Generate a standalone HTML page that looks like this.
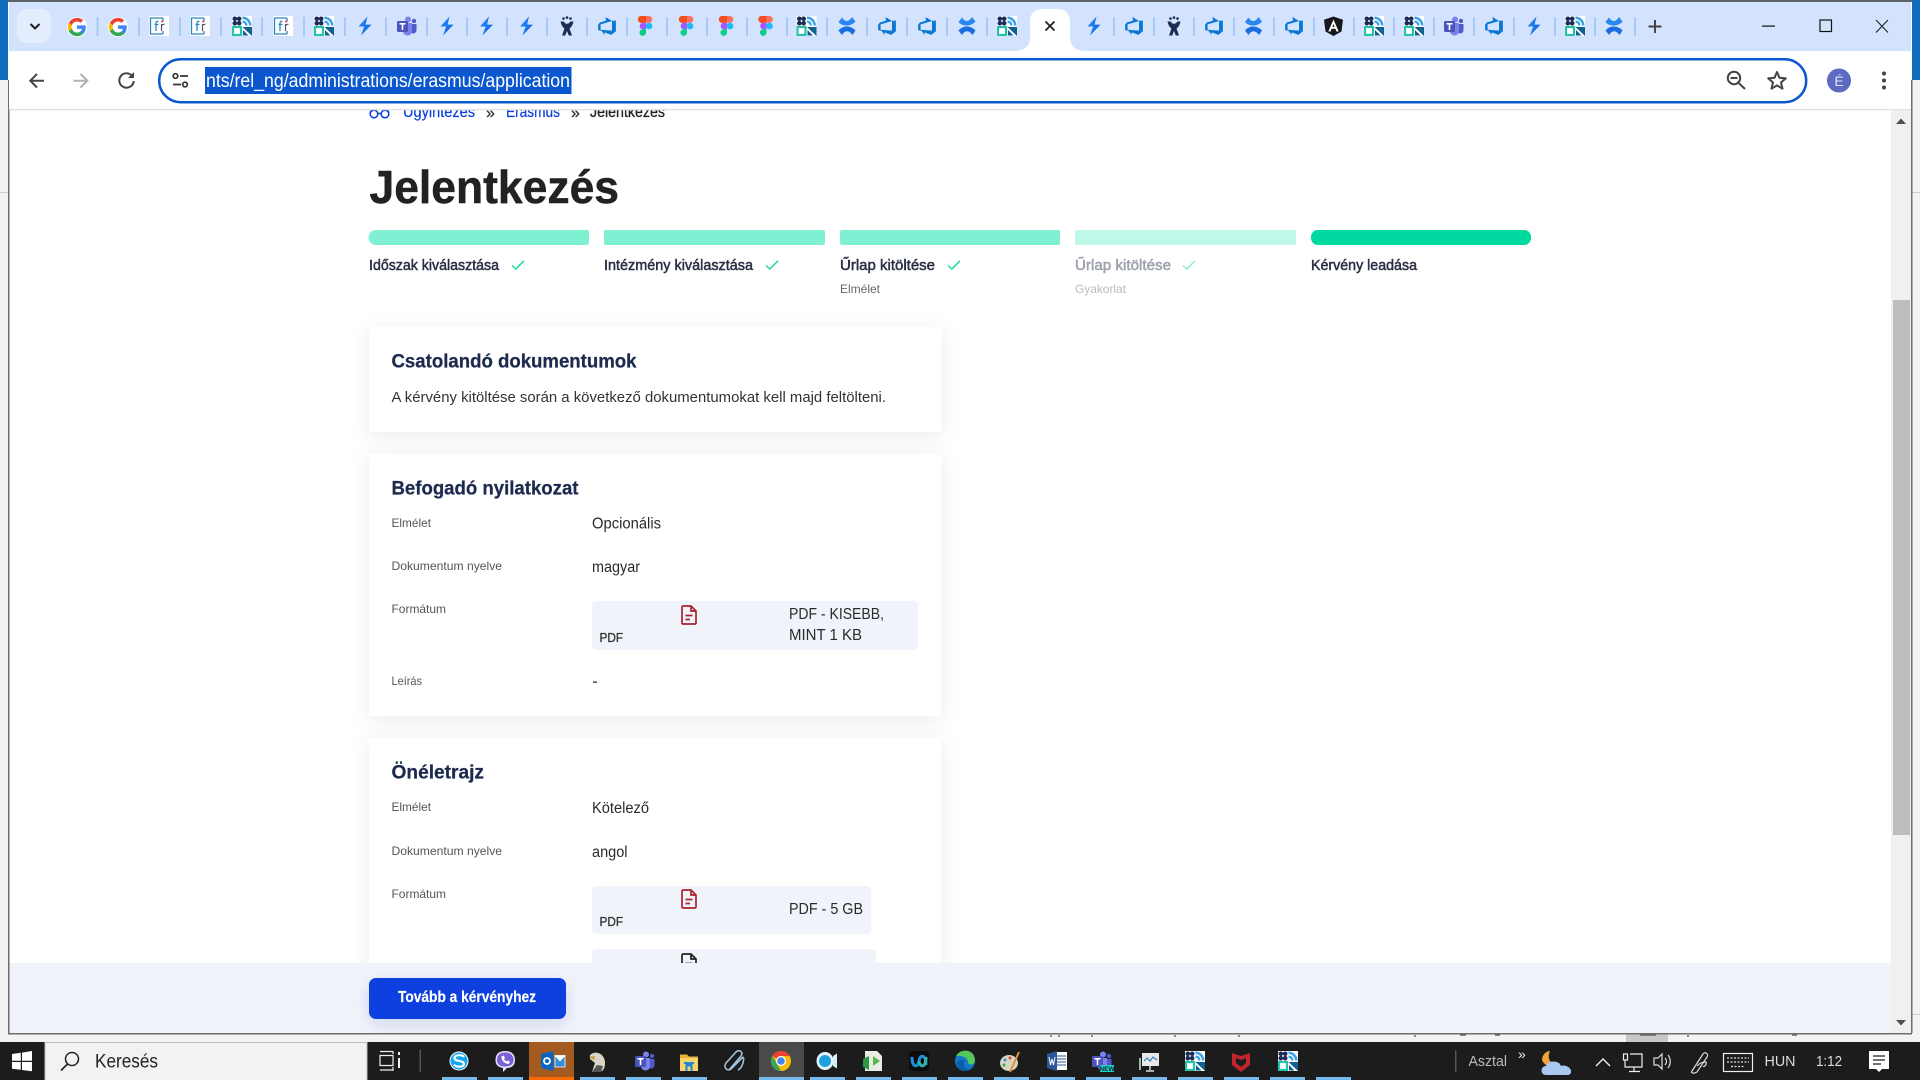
<!DOCTYPE html>
<html lang="hu">
<head>
<meta charset="utf-8">
<title>Jelentkezés</title>
<style>
html,body{margin:0;padding:0;background:#fff;width:1920px;height:1080px;overflow:hidden}
svg{display:block}
text{font-family:"Liberation Sans",sans-serif}
.h{font-weight:700;fill:#1c2a4e;stroke:#1c2a4e;stroke-width:.25;font-size:19px}
.s{font-size:15px;fill:#2a2f45;stroke:#2a2f45;stroke-width:.5}
.l{font-size:12px;fill:#555}
.v{font-size:15.5px;fill:#2b2b2b}
.p{font-size:12.5px;fill:#333;stroke:#333;stroke-width:.3}
.b{font-size:15.5px;fill:#0b3fdc;stroke:#0b3fdc;stroke-width:.2}
</style>
</head>
<body>
<svg xmlns="http://www.w3.org/2000/svg" width="1920" height="1080" viewBox="0 0 1920 1080">
<defs>
<filter id="sh" x="-10%" y="-20%" width="120%" height="145%"><feDropShadow dx="0" dy="4" stdDeviation="11" flood-color="#000" flood-opacity=".08"/></filter>
<filter id="bs" x="-15%" y="-40%" width="130%" height="190%"><feDropShadow dx="0" dy="5" stdDeviation="8" flood-color="#0a2a9e" flood-opacity=".14"/></filter>
<clipPath id="cc"><rect x="9" y="110" width="1882" height="853"/></clipPath>
<linearGradient id="jg" x1="0" y1="0" x2="1" y2="1"><stop offset="0" stop-color="#2a8cff"/><stop offset="1" stop-color="#0a5fd8"/></linearGradient>
<symbol id="G" viewBox="0 0 24 24"><circle cx="12" cy="12" r="12" fill="#fff"/><path fill="#4285F4" d="M22.56 12.25c0-.78-.07-1.53-.2-2.25H12v4.26h5.92c-.26 1.37-1.04 2.53-2.21 3.31v2.77h3.57c2.08-1.92 3.28-4.74 3.28-8.09z"/><path fill="#34A853" d="M12 23c2.97 0 5.46-.98 7.28-2.66l-3.57-2.77c-.98.66-2.23 1.06-3.71 1.06-2.86 0-5.29-1.93-6.16-4.53H2.18v2.84C3.99 20.53 7.7 23 12 23z"/><path fill="#FBBC05" d="M5.84 14.09c-.22-.66-.35-1.36-.35-2.09s.13-1.43.35-2.09V7.07H2.18C1.43 8.55 1 10.22 1 12s.43 3.45 1.18 4.93l2.85-2.22.81-.62z"/><path fill="#EA4335" d="M12 5.38c1.62 0 3.06.56 4.21 1.64l3.15-3.15C17.45 2.09 14.97 1 12 1 7.7 1 3.99 3.47 2.18 7.07l3.66 2.84c.87-2.6 3.3-4.53 6.16-4.53z"/></symbol>
<symbol id="fr" viewBox="0 0 20 20"><rect width="20" height="20" fill="#fff"/><path d="M14 2H1.500V18H14" fill="none" stroke="#2a86c4" stroke-width="1.300"/><path d="M14 2V5.500M14 15V18" stroke="#2a86c4" stroke-width="1.300"/><path d="M9.500 5.500C7.500 5 7 6 7 7.500V15M5.500 8.500H9.500" fill="none" stroke="#2a86c4" stroke-width="1.300"/><path d="M12.500 8V15M12.500 9.500C13.500 8.500 14.500 8.200 15.500 8.300" fill="none" stroke="#556" stroke-width="1.200"/><circle cx="13" cy="5.500" r="1" fill="#e2336b"/></symbol>
<symbol id="g" viewBox="0 0 20 20"><rect width="20" height="20" fill="#fff"/><g fill="#1b2a56"><circle cx="2.800" cy="2.800" r="2.300"/><circle cx="7.200" cy="2.800" r="2.300"/><circle cx="2.800" cy="7.200" r="2.300"/><circle cx="7.200" cy="7.200" r="2.300"/></g><path d="M10.500 .5C15.500 .5 19.500 4.500 19.500 9.500H17C17 6 14 3 10.500 3Z" fill="#3aa3ea"/><path d="M10.500 4.500C13.500 4.500 15.500 6.500 15.500 9.500H13.200C13.200 8 12 6.800 10.500 6.800Z" fill="#3aa3ea"/><rect x="1" y="11" width="8" height="8" fill="none" stroke="#27c3a9" stroke-width="2.200"/><path d="M10.500 11H20V20L10.500 11Z" fill="#12608f"/><path d="M11 14l5.500 5.500H11Z" fill="#12608f"/></symbol>
<symbol id="j" viewBox="0 0 20 20"><path d="M12.500 .5L3.500 10.500H9.200L6 19.500L16.500 8.600H10.600Z" fill="url(#jg)"/></symbol>
<symbol id="t" viewBox="0 0 20 20"><circle cx="11" cy="3.500" r="3" fill="#7b83eb"/><circle cx="17" cy="5" r="2.200" fill="#5059c9"/><path d="M13 8h6.500v6c0 2-1.500 3.500-3.200 3.500S13 16 13 14Z" fill="#5059c9"/><path d="M6 7h9v8c0 2.800-2 4.500-4.500 4.500S6 17.500 6 15Z" fill="#7b83eb"/><rect x="0" y="5" width="11" height="11" rx="1.200" fill="#4b53bc"/><rect x="2.500" y="7" width="6" height="1.600" fill="#fff"/><rect x="4.700" y="7" width="1.600" height="7" fill="#fff"/></symbol>
<symbol id="x" viewBox="0 0 20 20"><g fill="#1c2b52"><circle cx="6.500" cy="2.500" r="1.300"/><circle cx="10" cy="1.600" r="1.300"/><circle cx="13.500" cy="2.500" r="1.300"/></g><path fill="#1c2b52" d="M3.500 5.500H6.800C7.800 8.500 12.200 8.500 13.200 5.500H16.500C15.500 10 13.800 11.500 12.500 12.500L15 19.500H11.800L10 15L8.200 19.500H5L7.500 12.500C6.200 11.500 4.500 10 3.500 5.500Z"/></symbol>
<symbol id="a" viewBox="0 0 18 18"><path fill="#0a78d4" d="M17 4v9.740l-4 3.280-6.200-2.260V17L3.290 12.410l10.230.8V4.440Zm-3.410.49L7.850 1v3.260L2.580 5.810 1 7.840v4.610l2.260 1V7.520Z"/></symbol>
<symbol id="f" viewBox="0 0 20 20"><path d="M4 0h6v6.700H7a3.350 3.350 0 0 1-3-6.700Z" fill="#f24e1e"/><path d="M10 0h3a3.350 3.350 0 0 1 0 6.700h-3Z" fill="#ff7262"/><path d="M7 6.700h3v6.600H7a3.300 3.300 0 0 1 0-6.600Z" fill="#a259ff"/><circle cx="13" cy="10" r="3.300" fill="#1abcfe"/><path d="M7 13.300h3V17a3.300 3.300 0 1 1-3-3.700Z" fill="#0acf83"/></symbol>
<symbol id="c" viewBox="0 0 20 20"><path d="M1.500 6C5 10.500 14 11 18.500 5.500L15 1C12 6 8 6.500 5 1.500Z" fill="#2a86f0"/><path d="M1.500 14.500C6 9 14 9.500 18.500 14.500L15.500 19C12 14 8 14 5 19Z" fill="#1a6fe0"/></symbol>
<symbol id="A" viewBox="0 0 20 20"><path d="M10 .5L19.500 3.800L18 15.500L10 20L2 15.500L.5 3.800Z" fill="#17171b"/><path fill="#fff" fill-rule="evenodd" d="M10 3.500L4.800 15.500H7L8.100 12.800H11.900L13 15.500H15.200ZM8.900 10.900L10 8L11.100 10.900Z"/></symbol>
<symbol id="doc" viewBox="0 0 16 20"><path d="M2.200 1H10L15 6V18a1.200 1.200 0 0 1-1.200 1H2.200A1.200 1.200 0 0 1 1 18V2.200A1.200 1.200 0 0 1 2.200 1ZM10 1V6H15M4.500 10.500H11.500M4.500 14.500H9" fill="none" stroke="currentColor" stroke-width="1.700"/></symbol>
<symbol id="ck" viewBox="0 0 14 10"><path d="M1 5.500L4.800 9L13 .8" fill="none" stroke="currentColor" stroke-width="1.500"/></symbol>
</defs>

<!-- Page content -->
<rect x="9" y="110" width="1882" height="923" fill="#fff"/>
<g clip-path="url(#cc)">
  <!-- breadcrumb -->
  <g fill="none" stroke="#0b3fdc" stroke-width="1.500"><circle cx="374" cy="114" r="3.800"/><circle cx="385" cy="114" r="3.800"/><path d="M378 113.500H381M370 113L372 109M389 113L387 109"/></g>
  <text class="b" x="403" y="117" textLength="72" lengthAdjust="spacingAndGlyphs">Ügyintézés</text>
  <text x="486" y="118" font-size="16" fill="#333" stroke="#333" stroke-width=".3">»</text>
  <text class="b" x="506" y="117" textLength="54" lengthAdjust="spacingAndGlyphs">Erasmus</text>
  <text x="571" y="118" font-size="16" fill="#333" stroke="#333" stroke-width=".3">»</text>
  <text x="590" y="117" font-size="15.500" fill="#222" stroke="#222" stroke-width=".3" textLength="75" lengthAdjust="spacingAndGlyphs">Jelentkezés</text>

  <!-- title -->
  <text x="369.500" y="203" font-size="46" font-weight="700" fill="#222" stroke="#222" stroke-width=".5" textLength="249.500" lengthAdjust="spacingAndGlyphs">Jelentkezés</text>

  <!-- steps -->
  <path d="M376 230H587a2 2 0 0 1 2 2V243a2 2 0 0 1-2 2H376a7.500 7.500 0 0 1 0-15Z" fill="#80f0d2"/>
  <rect x="604" y="230" width="221" height="15" rx="2" fill="#80f0d2"/>
  <rect x="840" y="230" width="220" height="15" rx="2" fill="#80f0d2"/>
  <rect x="1075" y="230" width="221" height="15" rx="2" fill="#bff7e8"/>
  <rect x="1311" y="230" width="220" height="15" rx="7" fill="#00d9a0"/>

  <text class="s" x="369" y="270" textLength="130" lengthAdjust="spacingAndGlyphs">Időszak kiválasztása</text>
  <use href="#ck" x="511" y="260" width="14" height="10" color="#1ed8a4"/>
  <text class="s" x="604" y="270" textLength="149" lengthAdjust="spacingAndGlyphs">Intézmény kiválasztása</text>
  <use href="#ck" x="765" y="260" width="14" height="10" color="#1ed8a4"/>
  <text class="s" x="840" y="270" textLength="95" lengthAdjust="spacingAndGlyphs">Űrlap kitöltése</text>
  <use href="#ck" x="947" y="260" width="14" height="10" color="#1ed8a4"/>
  <text class="s" x="1075" y="270" textLength="96" lengthAdjust="spacingAndGlyphs" style="fill:#9da1ad;stroke:#9da1ad">Űrlap kitöltése</text>
  <use href="#ck" x="1182" y="260" width="14" height="10" color="#8eecd2"/>
  <text class="s" x="1311" y="270" textLength="106" lengthAdjust="spacingAndGlyphs">Kérvény leadása</text>
  <text class="l" x="840" y="293" textLength="40" lengthAdjust="spacingAndGlyphs" style="fill:#666">Elmélet</text>
  <text class="l" x="1075" y="293" textLength="51" lengthAdjust="spacingAndGlyphs" style="fill:#bbb">Gyakorlat</text>

  <!-- card 1 -->
  <rect x="369" y="327" width="572" height="105" fill="#fff" filter="url(#sh)"/>
  <text class="h" x="391.500" y="367.500" textLength="245" lengthAdjust="spacingAndGlyphs">Csatolandó dokumentumok</text>
  <text class="v" x="391.500" y="402" textLength="494.500" lengthAdjust="spacingAndGlyphs" style="font-size:15px;fill:#333">A kérvény kitöltése során a következő dokumentumokat kell majd feltölteni.</text>

  <!-- card 2 -->
  <rect x="369" y="454" width="572" height="262" fill="#fff" filter="url(#sh)"/>
  <text class="h" x="391.500" y="494.500" textLength="187" lengthAdjust="spacingAndGlyphs">Befogadó nyilatkozat</text>
  <text class="l" x="391.500" y="527" textLength="39.500" lengthAdjust="spacingAndGlyphs">Elmélet</text>
  <text class="v" x="592" y="528.500" textLength="69" lengthAdjust="spacingAndGlyphs">Opcionális</text>
  <text class="l" x="391.500" y="570" textLength="110.500" lengthAdjust="spacingAndGlyphs">Dokumentum nyelve</text>
  <text class="v" x="592" y="572" textLength="48" lengthAdjust="spacingAndGlyphs">magyar</text>
  <text class="l" x="391.500" y="613" textLength="54.500" lengthAdjust="spacingAndGlyphs">Formátum</text>
  <rect x="592" y="601" width="326" height="49" rx="4" fill="#f1f3fb"/>
  <use href="#doc" x="681" y="605" width="16" height="20" color="#a8232e"/>
  <text class="p" x="599.500" y="642" textLength="23.500" lengthAdjust="spacingAndGlyphs">PDF</text>
  <text class="v" x="789" y="619" textLength="95" lengthAdjust="spacingAndGlyphs">PDF - KISEBB,</text>
  <text class="v" x="789" y="640" textLength="73" lengthAdjust="spacingAndGlyphs">MINT 1 KB</text>
  <text class="l" x="391.500" y="685" textLength="30.500" lengthAdjust="spacingAndGlyphs">Leírás</text>
  <rect x="593" y="681.500" width="4" height="1.300" fill="#333"/>

  <!-- card 3 -->
  <rect x="369" y="738" width="572" height="320" fill="#fff" filter="url(#sh)"/>
  <text class="h" x="391.500" y="778.500" textLength="92.500" lengthAdjust="spacingAndGlyphs">Önéletrajz</text>
  <text class="l" x="391.500" y="811" textLength="39.500" lengthAdjust="spacingAndGlyphs">Elmélet</text>
  <text class="v" x="592" y="813" textLength="57" lengthAdjust="spacingAndGlyphs">Kötelező</text>
  <text class="l" x="391.500" y="855" textLength="110.500" lengthAdjust="spacingAndGlyphs">Dokumentum nyelve</text>
  <text class="v" x="592" y="857" textLength="35.500" lengthAdjust="spacingAndGlyphs">angol</text>
  <text class="l" x="391.500" y="898" textLength="54.500" lengthAdjust="spacingAndGlyphs">Formátum</text>
  <rect x="592" y="886" width="279" height="48" rx="4" fill="#f1f3fb"/>
  <use href="#doc" x="681" y="889" width="16" height="20" color="#a8232e"/>
  <text class="p" x="599.500" y="926" textLength="23.500" lengthAdjust="spacingAndGlyphs">PDF</text>
  <text class="v" x="789" y="914" textLength="74" lengthAdjust="spacingAndGlyphs">PDF - 5 GB</text>
  <rect x="592" y="949" width="284" height="48" rx="4" fill="#f1f3fb"/>
  <use href="#doc" x="681" y="953" width="16" height="20" color="#222"/>
</g>

<!-- Footer bar -->
<rect x="9" y="963" width="1882" height="70" fill="#f1f3fb"/>
<rect x="369" y="978" width="197" height="41" rx="7" fill="#0a3fde" filter="url(#bs)"/>
<text x="398" y="1002" font-size="16" font-weight="700" fill="#fff" stroke="#fff" stroke-width=".2" textLength="138" lengthAdjust="spacingAndGlyphs">Tovább a kérvényhez</text>

<!-- Scrollbar -->
<rect x="1891" y="110" width="20" height="923" fill="#f0f0f0"/>
<rect x="1893" y="300" width="17" height="535" fill="#bdbdbd"/>
<path d="M1901 118.500L1906 124H1896Z" fill="#505050"/>
<path d="M1896 1020H1906L1901 1025.500Z" fill="#505050"/>

<!-- Desktop strips / window edges -->
<rect x="0" y="0" width="8" height="1042" fill="#f3f3f3"/>
<rect x="1912" y="0" width="8" height="1042" fill="#f3f3f3"/>
<rect x="0" y="0" width="8" height="80" fill="#0f6cbd"/>
<rect x="1912" y="0" width="8" height="80" fill="#0f6cbd"/>
<rect x="0" y="192" width="8" height="1" fill="#cfcfcf"/>
<rect x="1912" y="192" width="8" height="1" fill="#cfcfcf"/>
<rect x="1912" y="1014" width="8" height="1" fill="#cfcfcf"/>
<rect x="8" y="80" width="1.500" height="953" fill="#6e6e6e"/>
<rect x="1911" y="80" width="1.500" height="953" fill="#6e6e6e"/>
<rect x="8" y="1033" width="1904" height="1.500" fill="#6e6e6e"/>
<rect x="8" y="1034.500" width="1912" height="7.500" fill="#f3f3f3"/>
<rect x="1626" y="1034.500" width="42" height="7.500" fill="#c8c8c8"/>
<path d="M1051 1035v2M1059 1035v2M1092 1035v2M1175 1035v2M1239 1035v2M1415 1035v2M1460 1035h6M1495 1035h5M1640 1035h16M1688 1035v2M1792 1035h5" stroke="#666" stroke-width="1.500"/>

<!-- Tab strip -->
<rect x="8" y="0" width="1904" height="2" fill="#5f6368"/>
<rect x="9" y="2" width="1902" height="49" fill="#d3e3fd"/>
<rect x="17" y="9" width="34" height="34" rx="10" fill="#e4edfd"/>
<path d="M30.500 24L35 28.500L39.500 24" fill="none" stroke="#1f1f1f" stroke-width="2"/>
<g fill="#a9c8f8">
<rect x="96.500" y="17" width="2" height="19"/><rect x="138" y="17" width="2" height="19"/><rect x="179" y="17" width="2" height="19"/><rect x="220" y="17" width="2" height="19"/><rect x="261" y="17" width="2" height="19"/><rect x="303" y="17" width="2" height="19"/><rect x="344" y="17" width="2" height="19"/><rect x="385" y="17" width="2" height="19"/><rect x="426" y="17" width="2" height="19"/><rect x="466" y="17" width="2" height="19"/><rect x="506" y="17" width="2" height="19"/><rect x="546" y="17" width="2" height="19"/><rect x="586" y="17" width="2" height="19"/><rect x="626" y="17" width="2" height="19"/><rect x="666" y="17" width="2" height="19"/><rect x="706" y="17" width="2" height="19"/><rect x="746" y="17" width="2" height="19"/><rect x="786" y="17" width="2" height="19"/><rect x="826" y="17" width="2" height="19"/><rect x="866" y="17" width="2" height="19"/><rect x="906" y="17" width="2" height="19"/><rect x="946" y="17" width="2" height="19"/><rect x="986" y="17" width="2" height="19"/><rect x="1113" y="17" width="2" height="19"/><rect x="1153" y="17" width="2" height="19"/><rect x="1193" y="17" width="2" height="19"/><rect x="1233" y="17" width="2" height="19"/><rect x="1273" y="17" width="2" height="19"/><rect x="1313" y="17" width="2" height="19"/><rect x="1353" y="17" width="2" height="19"/><rect x="1393" y="17" width="2" height="19"/><rect x="1433" y="17" width="2" height="19"/><rect x="1473" y="17" width="2" height="19"/><rect x="1513" y="17" width="2" height="19"/><rect x="1554" y="17" width="2" height="19"/><rect x="1594" y="17" width="2" height="19"/><rect x="1634" y="17" width="2" height="19"/>
</g>
<use href="#G" x="67" y="17" width="20" height="20"/>
<use href="#G" x="108" y="17" width="20" height="20"/>
<use href="#fr" x="149" y="16" width="20" height="20"/>
<use href="#fr" x="190" y="16" width="20" height="20"/>
<use href="#g" x="232" y="16" width="20" height="20"/>
<use href="#fr" x="273" y="16" width="20" height="20"/>
<use href="#g" x="314" y="16" width="20" height="20"/>
<use href="#j" x="355" y="16" width="20" height="20"/>
<use href="#t" x="397" y="16" width="20" height="20"/>
<use href="#j" x="437" y="16" width="20" height="20"/>
<use href="#j" x="476.500" y="16" width="20" height="20"/>
<use href="#j" x="516.500" y="16" width="20" height="20"/>
<use href="#x" x="557" y="16" width="20" height="20"/>
<use href="#a" x="597" y="16" width="20" height="20"/>
<use href="#f" x="636" y="16" width="20" height="20"/>
<use href="#f" x="677" y="16" width="20" height="20"/>
<use href="#f" x="717" y="16" width="20" height="20"/>
<use href="#f" x="756.500" y="16" width="20" height="20"/>
<use href="#g" x="796.500" y="16" width="20" height="20"/>
<use href="#c" x="837" y="16" width="20" height="20"/>
<use href="#a" x="877" y="16" width="20" height="20"/>
<use href="#a" x="917" y="16" width="20" height="20"/>
<use href="#c" x="957" y="16" width="20" height="20"/>
<use href="#g" x="997" y="16" width="20" height="20"/>
<!-- active tab -->
<path d="M1014 51C1024 51 1030 46 1030 38V21C1030 14 1035 9 1042 9H1058C1065 9 1070 14 1070 21V38C1070 46 1076 51 1086 51Z" fill="#fff"/>
<path d="M1045.500 21.500L1054.500 30.500M1054.500 21.500L1045.500 30.500" stroke="#1f1f1f" stroke-width="1.800"/>
<use href="#j" x="1084" y="16" width="20" height="20"/>
<use href="#a" x="1124" y="16" width="20" height="20"/>
<use href="#x" x="1164" y="16" width="20" height="20"/>
<use href="#a" x="1204" y="16" width="20" height="20"/>
<use href="#c" x="1243.500" y="16" width="20" height="20"/>
<use href="#a" x="1284" y="16" width="20" height="20"/>
<use href="#A" x="1323.500" y="16" width="20" height="20"/>
<use href="#g" x="1364" y="16" width="20" height="20"/>
<use href="#g" x="1404" y="16" width="20" height="20"/>
<use href="#t" x="1444" y="16" width="20" height="20"/>
<use href="#a" x="1484" y="16" width="20" height="20"/>
<use href="#j" x="1524" y="16" width="20" height="20"/>
<use href="#g" x="1565" y="16" width="20" height="20"/>
<use href="#c" x="1604" y="16" width="20" height="20"/>
<path d="M1655 20V33M1648.500 26.500H1661.500" stroke="#444" stroke-width="2"/>
<rect x="1762" y="25.500" width="13" height="1.200" fill="#111"/>
<rect x="1820" y="20" width="11.500" height="11.500" fill="none" stroke="#111" stroke-width="1.200"/>
<path d="M1876 20L1888 32.500M1888 20L1876 32.500" stroke="#222" stroke-width="1.100"/>

<!-- Toolbar -->
<path d="M9 110V59a8 8 0 0 1 8-8H1903a8 8 0 0 1 8 8V110Z" fill="#fff"/>
<rect x="9" y="109" width="1902" height="1.300" fill="#e1e1e1"/>
<path d="M1014 52C1024 52 1030 46 1030 40H1070C1070 46 1076 52 1086 52Z" fill="#fff"/>
<path d="M44 80.700H30.500M37 74L30.300 80.700L37 87.500" fill="none" stroke="#444" stroke-width="2"/>
<path d="M73.500 80.700H87M80.500 74L87.300 80.700L80.500 87.500" fill="none" stroke="#b0b0b0" stroke-width="2"/>
<path d="M132.500 76.500A7.200 7.200 0 1 0 133.700 81" fill="none" stroke="#444" stroke-width="2"/>
<path d="M134 72V78H128Z" fill="#444"/>
<rect x="159.200" y="59.200" width="1647" height="43" rx="21.500" fill="#fff" stroke="#0b57d0" stroke-width="2.500"/>
<g fill="none" stroke="#333" stroke-width="1.700"><circle cx="175.500" cy="76" r="2.300"/><path d="M180 76H188M173 84.500H181"/><circle cx="185" cy="84.500" r="2.300"/></g>
<rect x="205" y="67" width="366.500" height="27" fill="#0b57d0"/>
<text x="206" y="87" font-size="19" fill="#fff" textLength="364" lengthAdjust="spacingAndGlyphs">nts/rel_ng/administrations/erasmus/application</text>
<g fill="none" stroke="#444" stroke-width="2"><circle cx="1734" cy="78" r="6.200"/><path d="M1730.500 78H1737.500M1738.500 82.800L1745 89"/></g>
<path d="M1777 72L1779.500 77.800L1785.800 78.400L1781 82.500L1782.500 88.700L1777 85.400L1771.500 88.700L1773 82.500L1768.200 78.400L1774.500 77.800Z" fill="none" stroke="#444" stroke-width="2" stroke-linejoin="round"/>
<circle cx="1839" cy="80.500" r="12" fill="#5c6bc0"/>
<text x="1839" y="86" font-size="14" fill="#dfe3f6" text-anchor="middle">É</text>
<g fill="#444"><circle cx="1884" cy="73.500" r="2"/><circle cx="1884" cy="80.500" r="2"/><circle cx="1884" cy="87.500" r="2"/></g>

<!-- Taskbar -->
<rect x="0" y="1042" width="1920" height="38" fill="#1c1c1c"/>
<g fill="#fff"><path d="M12 1054L20.800 1052.800V1060.700H12Z"/><path d="M22 1052.600L32 1051V1060.700H22Z"/><path d="M12 1062H20.800V1069.800L12 1068.700Z"/><path d="M22 1062H32V1071.300L22 1070Z"/></g>
<rect x="45" y="1042" width="322" height="38" fill="#f2f2f2"/>
<path d="M45 1042.500H367M45 1042V1080M367 1042V1080" stroke="#bdbdbd" stroke-width="1" fill="none"/>
<circle cx="72" cy="1059" r="6.500" fill="none" stroke="#222" stroke-width="1.500"/>
<path d="M67.500 1064L61 1070.500" stroke="#222" stroke-width="1.700"/>
<text x="95" y="1067.500" font-size="19.500" fill="#222" textLength="63" lengthAdjust="spacingAndGlyphs">Keresés</text>
<g fill="none" stroke="#eee" stroke-width="1.200"><path d="M380 1055.500H393V1065.500H380ZM380 1051.500H393M380 1070H393M393 1051V1054M393 1067V1071"/><path d="M399 1052V1055M399 1058V1068" stroke-width="2"/></g>
<rect x="419.500" y="1050" width="1.500" height="22" fill="#555"/>

<rect x="529" y="1042" width="45" height="38" fill="#a55a1f"/>
<rect x="759" y="1042" width="45" height="38" fill="#4a4a4a"/>
<g fill="#76b9ed">
<rect x="442" y="1077" width="35" height="3"/><rect x="488" y="1077" width="35" height="3"/><rect x="580" y="1077" width="35" height="3"/><rect x="626" y="1077" width="35" height="3"/><rect x="672" y="1077" width="35" height="3"/><rect x="759" y="1077" width="45" height="3"/><rect x="810" y="1077" width="35" height="3"/><rect x="856" y="1077" width="35" height="3"/><rect x="902" y="1077" width="35" height="3"/><rect x="948" y="1077" width="35" height="3"/><rect x="994" y="1077" width="35" height="3"/><rect x="1040" y="1077" width="35" height="3"/><rect x="1086" y="1077" width="35" height="3"/><rect x="1132" y="1077" width="35" height="3"/><rect x="1178" y="1077" width="35" height="3"/><rect x="1224" y="1077" width="35" height="3"/><rect x="1270" y="1077" width="35" height="3"/><rect x="1316" y="1077" width="35" height="3"/>
</g>
<rect x="529" y="1077" width="45" height="3" fill="#ff6a00"/>
<!-- skype -->
<circle cx="459" cy="1061" r="9.500" fill="#fff"/><circle cx="459" cy="1061" r="8.500" fill="#12a9ea"/>
<path d="M464 1057C462.500 1054.500 454.500 1054.500 454.500 1058C454.500 1062 464 1060 464 1064C464 1067.500 455.500 1067.500 454 1064.500" fill="none" stroke="#fff" stroke-width="2.100"/>
<!-- viber -->
<path d="M505 1051C511 1051 515 1054 515 1060C515 1066 511 1068 507 1068L503 1072V1068C498 1067 495.500 1065 495.500 1060C495.500 1054 499 1051 505 1051Z" fill="#e6e0fb"/>
<path d="M505 1052.500C510 1052.500 513.500 1055 513.500 1060C513.500 1064.500 510 1066.500 505 1066.500C500 1066.500 497 1064.500 497 1060C497 1055 500 1052.500 505 1052.500Z" fill="#7a5fd6"/>
<path d="M501.500 1056.500C501.500 1061 504.500 1063.500 508.500 1064L510 1061.800L507.600 1060.500L506.500 1061.500C505.500 1061 504.500 1060 504 1059L505 1058L503.700 1055.500Z" fill="#fff"/>
<!-- outlook -->
<rect x="555" y="1055" width="10" height="12" fill="#fff"/><path d="M555 1055.500H565V1067H555ZM555.500 1056L560 1061L564.500 1056" fill="#2d8fdc" stroke="#fff" stroke-width=".8"/>
<path d="M541 1054L553.500 1051V1071L541 1068Z" fill="#0a64c0"/><circle cx="547" cy="1061" r="3" fill="none" stroke="#fff" stroke-width="1.800"/>
<!-- eagle -->
<path d="M590 1055C594 1051 601 1052 604 1058C606 1063 605 1069 602 1071L592 1072L595 1063L590 1059Z" fill="#d8d4c8"/><path d="M589 1057L595 1056L594 1060Z" fill="#c99a33"/><path d="M597 1065L603 1066L601 1072L592 1072Z" fill="#555"/>
<!-- teams -->
<use href="#t" x="635" y="1051" width="20" height="20"/>
<!-- folder -->
<path d="M680 1058V1054.500H687L689 1056.500H698V1058Z" fill="#e8b339"/>
<rect x="680" y="1058" width="18" height="13" fill="#f7d469"/>
<path d="M685.500 1062H692.500V1071H690.500V1066.500H687.500V1071H685.500Z" fill="#1e88d6"/><rect x="684" y="1062" width="10" height="2" fill="#1e88d6"/>
<!-- paperclip -->
<path d="M729 1070L741 1056C744 1052 739 1049 736 1052L726 1063C723 1067 727 1072 731 1069L742 1058C745 1054 744 1067 738 1070" fill="none" stroke="#9fc3dc" stroke-width="1.600"/>
<!-- chrome -->
<circle cx="781" cy="1061" r="10" fill="#fbbc05"/>
<path d="M781 1051A10 10 0 0 1 789.700 1056H781A5 5 0 0 0 776.500 1058.800L772.300 1056A10 10 0 0 1 781 1051Z" fill="#ea4335"/>
<path d="M772.300 1056L777 1064L781 1071A10 10 0 0 1 772.300 1056Z" fill="#34a853"/>
<circle cx="781" cy="1061" r="5" fill="#fff"/><circle cx="781" cy="1061" r="3.800" fill="#4285f4"/>
<!-- video -->
<ellipse cx="825" cy="1061" rx="8.500" ry="9" fill="#e6f4fb"/><circle cx="825" cy="1061" r="6" fill="#1e9fe0"/><path d="M833 1056L837 1053.500V1068.500L833 1066Z" fill="#d8ecf8"/>
<!-- doc green -->
<path d="M865 1051H877L882 1056V1071H865Z" fill="#e8ece4"/><path d="M873 1056L880 1061L873 1066Z" fill="#58b84a"/><path d="M863 1059L869 1056V1070L863 1067Z" fill="#2a9a3e"/>
<!-- webex -->
<rect x="909" y="1051" width="20" height="20" rx="3" fill="#0c0c0c"/>
<path d="M912 1057C912 1068 918 1068 919 1061C920 1054 926 1054 926 1065" fill="none" stroke="#1f8fd8" stroke-width="3"/><path d="M926 1057C926 1068 920 1068 919 1061" fill="none" stroke="#2ab6a4" stroke-width="3"/>
<!-- edge -->
<circle cx="965" cy="1061" r="10" fill="#1378c8"/>
<path d="M956 1056C959 1050 968 1049 972 1053C976 1057 975.500 1063 973 1064C970 1065 968 1064 968 1062C968 1058 962 1055 956 1056Z" fill="#54c85a"/>
<path d="M965 1061C962 1064 965 1070 970 1069C966 1073 958 1071 957 1064C956 1061 962 1058 965 1061Z" fill="#0a5da8"/>
<!-- paint -->
<ellipse cx="1009" cy="1063" rx="9" ry="8" fill="#d9d4c4"/><circle cx="1005" cy="1060" r="1.500" fill="#2b8ad8"/><circle cx="1010" cy="1058" r="1.500" fill="#e0433a"/><circle cx="1004" cy="1065" r="1.500" fill="#3aa64a"/><path d="M1019 1052L1010 1072" stroke="#d8963a" stroke-width="2"/>
<!-- word -->
<rect x="1054" y="1052" width="13" height="18" fill="#fff"/><path d="M1056 1056H1066M1056 1059H1066M1056 1062H1066M1056 1065H1066" stroke="#2b579a"/>
<path d="M1047 1054L1057 1051V1071L1047 1068Z" fill="#2b579a"/>
<path d="M1049 1057L1050.500 1065L1052 1059L1053.500 1065L1055 1057" fill="none" stroke="#fff" stroke-width="1"/>
<!-- teams new -->
<use href="#t" x="1092" y="1051" width="20" height="20"/>
<rect x="1100" y="1065" width="14" height="7" fill="#21d4c8"/>
<text x="1107" y="1071" font-size="6.500" font-weight="700" fill="#123" text-anchor="middle">NEW</text>
<!-- monitor -->
<rect x="1142" y="1053" width="17" height="13" fill="#e8e8e8"/><path d="M1144 1061L1147 1058L1150 1061L1153 1057L1157 1060" fill="none" stroke="#2b7fc8" stroke-width="1.100"/>
<rect x="1139" y="1058" width="2" height="12" fill="#9ab89a"/><path d="M1150 1066V1070M1146 1071H1154" stroke="#ddd" stroke-width="1.500"/>
<use href="#g" x="1185" y="1051" width="20" height="20"/>
<!-- mcafee -->
<path d="M1232 1053L1241 1056L1250 1053V1065L1241 1072L1232 1065Z" fill="#c0262c"/><path d="M1236 1058L1241 1060L1246 1058V1063L1241 1067L1236 1063Z" fill="#1c1c1c"/>
<use href="#g" x="1278" y="1051" width="20" height="20"/>

<!-- tray -->
<rect x="1455" y="1050" width="1.500" height="22" fill="#555"/>
<text x="1468.500" y="1066" font-size="15" fill="#bbb" textLength="38.500" lengthAdjust="spacingAndGlyphs">Asztal</text>
<text x="1518" y="1059" font-size="14" fill="#eee">»</text>
<path d="M1550 1051C1546 1060 1552 1066 1560 1063C1556 1069 1545 1068 1542 1060C1542 1055 1546 1051 1550 1051Z" fill="#f2a23a"/>
<path d="M1546 1075C1540 1075 1540 1066 1546 1066C1548 1060 1559 1060 1561 1066C1565 1064 1572 1068 1571 1072C1571 1074 1569 1075 1567 1075Z" fill="#a9c8f0"/>
<path d="M1596 1066L1603 1059L1610 1066" fill="none" stroke="#eee" stroke-width="1.400"/>
<g fill="none" stroke="#eee" stroke-width="1.200"><path d="M1630 1054H1642V1067H1625V1060M1634 1067V1071M1629 1071.500H1640"/><rect x="1623.500" y="1054" width="4" height="6"/></g>
<g fill="none" stroke="#ddd" stroke-width="1.200"><path d="M1654 1058H1658L1662 1054V1069L1658 1065H1654Z"/><path d="M1665 1058C1667 1060 1667 1063 1665 1065M1668 1055C1671 1059 1671 1064 1668 1068"/></g>
<g fill="none" stroke="#ddd" stroke-width="1.200"><path d="M1692 1071L1703 1054C1705 1051 1709 1054 1707 1057L1697 1072C1694 1074 1690 1073 1692 1071Z"/><path d="M1697 1066C1700 1063 1702 1062 1706 1062C1707 1064 1704 1068 1703 1066"/></g>
<rect x="1723.500" y="1053.500" width="29" height="18" fill="none" stroke="#eee" stroke-width="1.200"/>
<path d="M1727 1058H1749M1727 1062H1749M1731 1066.500H1745" stroke="#ddd" stroke-width="1.200" stroke-dasharray="2 1.500"/>
<text x="1764.500" y="1066" font-size="15" fill="#ddd" textLength="31" lengthAdjust="spacingAndGlyphs">HUN</text>
<text x="1816" y="1066" font-size="15" fill="#ddd" textLength="26" lengthAdjust="spacingAndGlyphs">1:12</text>
<path d="M1869 1051H1889V1069H1882L1879 1072L1876 1069H1869Z" fill="#fff"/>
<path d="M1873 1056H1885M1873 1060H1885M1873 1064H1881" stroke="#222" stroke-width="1.200"/>
</svg>
</body>
</html>
